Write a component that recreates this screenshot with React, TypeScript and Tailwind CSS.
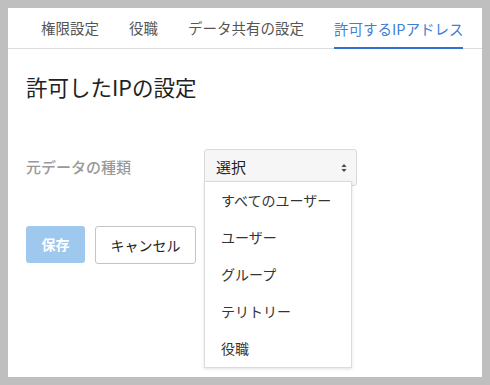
import React from "react";

export default function App() {
  const font = { fontFamily: '"Noto Sans CJK JP", "Noto Sans", sans-serif' };
  const tabs = ["権限設定", "役職", "データ共有の設定", "許可するIPアドレス"];
  const items = ["すべてのユーザー", "ユーザー", "グループ", "テリトリー", "役職"];
  return (
    <div className="w-[490px] h-[385px] bg-[#bfbfbf] p-[8px]" style={font}>
      <div className="w-[474px] h-[369px] bg-white flex flex-col">
        <div className="h-[41px] border-b border-[#dddddd] flex items-end pl-[18px]">
          {tabs.map((t, i) => (
            <div
              key={t}
              className={
                "mx-[15px] h-[40px] shrink-0 whitespace-nowrap flex items-center text-[14.5px] leading-none " +
                (i === 3
                  ? "text-[#3f7fd6] border-b-2 border-[#2f73d0] mb-[-1px] pt-[2px]"
                  : "text-[#555555]")
              }
            >
              {t}
            </div>
          ))}
        </div>
        <div className="pl-[18px] pt-[24px]">
          <h1 className="text-[21.5px] leading-[28px] text-[#222222] font-normal">許可したIPの設定</h1>
          <div className="flex items-center mt-[48px]">
            <div className="w-[178px] text-[15px] text-[#999999] font-medium">元データの種類</div>
            <div className="relative">
              <div className="w-[153px] h-[37px] bg-[#f7f6f6] border border-[#d9d9d9] rounded-[3px] flex items-center justify-between pl-[11px] pr-[9px] text-[15px] text-[#222222]">
                <span>選択</span>
                <svg width="6" height="10" viewBox="0 0 6 10">
                  <path d="M0.5 4 L3 1 L5.5 4 Z" fill="#444" />
                  <path d="M0.5 6 L3 9 L5.5 6 Z" fill="#444" />
                </svg>
              </div>
              <div className="absolute left-0 top-[32px] w-[148px] bg-white border border-[#dcdcdc] shadow-[0_1px_3px_rgba(0,0,0,0.12)] z-10">
                {items.map((it) => (
                  <div key={it} className="h-[37px] flex items-center pl-[16px] text-[14px] text-[#333333]">
                    {it}
                  </div>
                ))}
              </div>
            </div>
          </div>
          <div className="flex mt-[40px] gap-[10px]">
            <button className="w-[59px] h-[37px] rounded-[3px] bg-[#9fc8ef] text-white text-[14px] font-bold">保存</button>
            <button className="w-[101px] h-[38px] rounded-[3px] bg-white border border-[#c4c4c4] text-[#222222] text-[14px]">キャンセル</button>
          </div>
        </div>
      </div>
    </div>
  );
}
